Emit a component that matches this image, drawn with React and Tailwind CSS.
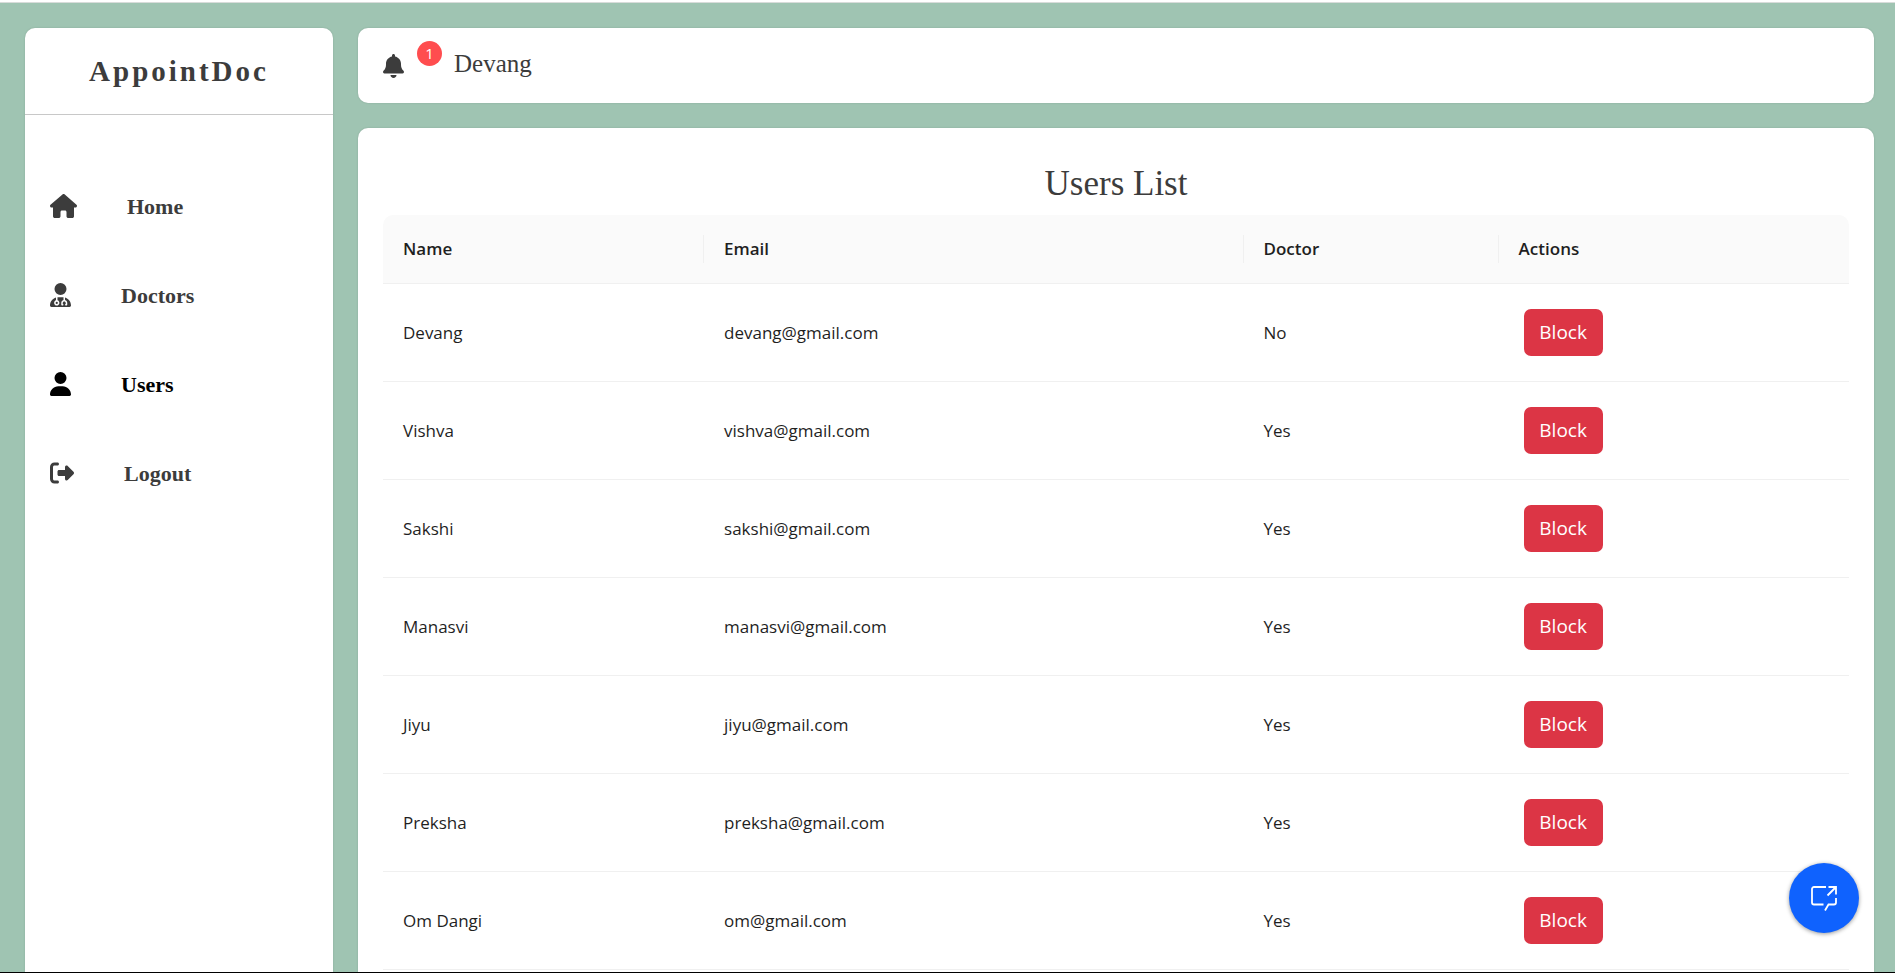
import { FaHouse, FaUserDoctor, FaUser, FaRightFromBracket, FaBell } from "react-icons/fa6";

const menu = [
  { label: "Home", Icon: FaHouse, width: "w-[27px]" },
  { label: "Doctors", Icon: FaUserDoctor, width: "w-[21px]" },
  { label: "Users", Icon: FaUser, width: "w-[21px]", active: true },
  { label: "Logout", Icon: FaRightFromBracket, width: "w-6" },
];

const users = [
  { name: "Devang", email: "devang@gmail.com", doctor: "No" },
  { name: "Vishva", email: "vishva@gmail.com", doctor: "Yes" },
  { name: "Sakshi", email: "sakshi@gmail.com", doctor: "Yes" },
  { name: "Manasvi", email: "manasvi@gmail.com", doctor: "Yes" },
  { name: "Jiyu", email: "jiyu@gmail.com", doctor: "Yes" },
  { name: "Preksha", email: "preksha@gmail.com", doctor: "Yes" },
  { name: "Om Dangi", email: "om@gmail.com", doctor: "Yes" },
];

function Sidebar() {
  return (
    <aside className="w-[308px] shrink-0 rounded-t-[10px] bg-white font-['Liberation_Serif',serif] shadow-[0_0_2px_rgba(0,0,0,0.15)]">
      <div className="flex h-[87px] items-center justify-center border-b border-[#c8c8c8]">
        <h1 className="text-[29px] leading-9 font-bold tracking-[3px]">AppointDoc</h1>
      </div>
      <nav className="mt-[73px] flex flex-col gap-[53px] px-[25px]">
        {menu.map(({ label, Icon, width, active }) => (
          <a
            key={label}
            href="#"
            className={`flex h-9 items-center gap-[50px] text-[22px] font-bold ${active ? "text-black" : "text-[#3c3c3c]"}`}
          >
            <Icon className={`h-6 shrink-0 ${width}`} />
            {label}
          </a>
        ))}
      </nav>
    </aside>
  );
}

function UsersTable() {
  const divider = <span className="absolute top-5 right-0 h-7 w-px bg-[#f0f0f0]" />;
  const head = "relative h-[69px] border-b border-[#f0f0f0] bg-[#fafafa] px-5 text-left font-semibold";
  const cell = "h-[98px] border-b border-[#f0f0f0] px-5";
  return (
    <table className="w-full table-fixed border-separate border-spacing-0 font-['Open_Sans',sans-serif] text-[17px] text-[#1f1f1f]">
      <colgroup>
        <col className="w-[21.9%]" />
        <col className="w-[36.8%]" />
        <col className="w-[17.4%]" />
        <col />
      </colgroup>
      <thead>
        <tr>
          <th className={`${head} rounded-tl-[10px]`}>Name{divider}</th>
          <th className={head}>Email{divider}</th>
          <th className={head}>Doctor{divider}</th>
          <th className={`${head} rounded-tr-[10px]`}>Actions</th>
        </tr>
      </thead>
      <tbody>
        {users.map((user) => (
          <tr key={user.email}>
            <td className={cell}>{user.name}</td>
            <td className={cell}>{user.email}</td>
            <td className={cell}>{user.doctor}</td>
            <td className={cell}>
              <button
                type="button"
                className="ml-[5px] flex h-[47px] w-[79px] items-center justify-center rounded-[7px] bg-[#dc3545] text-[19px] text-white"
              >
                Block
              </button>
            </td>
          </tr>
        ))}
      </tbody>
    </table>
  );
}

export default function App() {
  return (
    <div className="flex h-screen flex-col overflow-hidden border-t-2 border-b border-t-white border-b-black bg-[#9fc4b2] text-[#3c3c3c]">
      <div className="flex min-h-0 flex-1 gap-[25px] border-t border-[#d8dcda] pt-[25px] pr-[21px] pl-[25px]">
        <Sidebar />
        <main className="flex min-w-0 flex-1 flex-col gap-[25px]">
          <header className="flex h-[75px] shrink-0 items-center rounded-[10px] bg-white px-[25px] font-['Liberation_Serif',serif] shadow-[0_0_2px_rgba(0,0,0,0.15)]">
            <div className="flex items-center">
              <FaBell className="h-6 w-[21px]" />
              <span className="mb-6 ml-[13px] flex size-[25px] items-center justify-center rounded-full bg-[#ff4d4f] font-['Open_Sans',sans-serif] text-[15px] text-white">
                1
              </span>
            </div>
            <a href="#" className="mb-1 ml-3 text-[25px] leading-8">Devang</a>
          </header>
          <section className="min-h-0 flex-1 overflow-hidden rounded-t-[10px] bg-white px-[25px] pt-[34px] shadow-[0_0_2px_rgba(0,0,0,0.15)]">
            <h2 className="mb-[9px] text-center font-['Liberation_Serif',serif] text-[35px] leading-[44px]">Users List</h2>
            <UsersTable />
          </section>
        </main>
      </div>
      <button
        type="button"
        aria-label="Open chat"
        className="fixed right-9 bottom-10 flex size-[70px] items-center justify-center rounded-full bg-[#0f62fe] text-white shadow-[0_1px_4px_rgba(0,0,0,0.4)]"
      >
        <svg viewBox="0 0 28 28" className="size-7" fill="none" stroke="currentColor" strokeWidth="1.8">
          <path d="M16 3H4a2 2 0 0 0-2 2v13.5a2 2 0 0 0 2 2h9.5" />
          <path d="M15 26.5l3.5-6H24a2 2 0 0 0 2-2V14" />
          <path d="M18.5 3H26v7.5M26 3l-8.500 8.500" />
        </svg>
      </button>
    </div>
  );
}
